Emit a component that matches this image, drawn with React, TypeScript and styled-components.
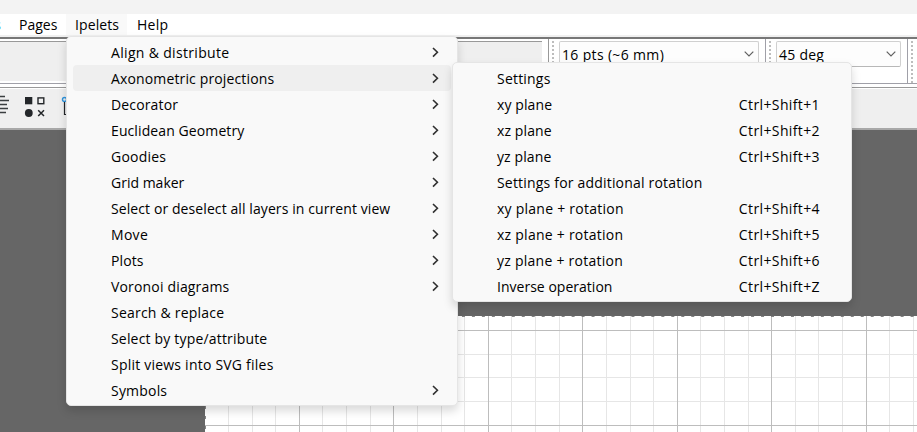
import React from "react";
import styled, { createGlobalStyle } from "styled-components";

const GlobalStyle = createGlobalStyle`
  * { box-sizing: border-box; }
  body {
    margin: 0;
    overflow: hidden;
    font-family: "Open Sans", "Noto Sans", sans-serif;
    font-size: 14px;
    color: #000;
  }
`;

const Window = styled.div`
  position: relative;
  width: 917px;
  height: 432px;
  display: flex;
  flex-direction: column;
  overflow: hidden;
  background: #666;
`;

const TitleStrip = styled.div`
  flex: none;
  height: 14px;
  background: #f3f3f3;
`;

const MenuBar = styled.nav`
  flex: none;
  height: 23px;
  display: flex;
  background: #fff;
  border-bottom: 2px solid #f0f0f0;
`;

const MenuBarItem = styled.div<{ $width: number; $pad: number; $active?: boolean }>`
  flex: none;
  width: ${(p) => p.$width}px;
  padding-left: ${(p) => p.$pad}px;
  line-height: 22px;
  white-space: nowrap;
  background: ${(p) => (p.$active ? "#f9f9f9" : "transparent")};
`;

const ClippedItem = styled.div`
  flex: none;
  width: 11px;
  display: flex;
  justify-content: flex-end;
  padding-right: 10px;
  line-height: 22px;
  color: #2a8ad8;
`;

const ToolBar = styled.div`
  flex: none;
  height: 51px;
  display: flex;
  background: #fff;
  border-top: 2px solid #777;
  border-bottom: 1px solid #999;
`;

const PanelArea = styled.div`
  flex: none;
  width: 549px;
  height: 45px;
  padding: 2px 6px 2px 0;
  border-right: 1px solid #999;
  border-bottom: 1px solid #a0a0a8;
`;

const Panel = styled.div`
  height: 40px;
  background: #efefef;
  border-top: 1px solid #999;
`;

const ComboSection = styled.div<{ $width: number }>`
  flex: none;
  width: ${(p) => p.$width}px;
  height: 45px;
  display: flex;
  align-items: flex-start;
  padding: 2px 6px 0 3px;
  border-right: 1px solid #a0a0a8;
  border-bottom: 1px solid #a0a0a8;
`;

const Grip = styled.div`
  flex: none;
  width: 2px;
  height: 42px;
  margin-right: 5px;
  background: repeating-linear-gradient(#bdbdbd 0 2px, transparent 2px 4px);
`;

const Combo = styled.div`
  flex: 1;
  height: 26px;
  display: flex;
  align-items: center;
  justify-content: space-between;
  padding: 0 4px 0 2px;
  background: #fdfdfd;
  border: 1px solid #d0d0d0;
  border-bottom-color: #b8b8b8;
  border-radius: 2px;
`;

const Label = styled.span<{ $tracking?: number }>`
  letter-spacing: ${(p) => p.$tracking ?? 0}px;
  white-space: nowrap;
`;

const IconBar = styled.div`
  flex: none;
  height: 42px;
  background: #efefef;
  border-top: 1px solid #fff;
  border-bottom: 2px solid #a8a8a8;
`;

const Workspace = styled.div`
  flex: 1;
  background: #666;
`;

const Drawing = styled.svg`
  display: block;
`;

const Popup = styled.div<{ $x: number; $y: number; $width: number }>`
  position: absolute;
  left: ${(p) => p.$x}px;
  top: ${(p) => p.$y}px;
  width: ${(p) => p.$width}px;
  padding: 2px 6px;
  background: #f9f9f9;
  border: 1px solid #e5e5e5;
  border-radius: 5px;
  box-shadow: 0 5px 10px rgba(0, 0, 0, 0.15);
`;

const MenuRow = styled.div<{ $active?: boolean; $end: number }>`
  height: 26px;
  display: flex;
  align-items: center;
  justify-content: space-between;
  padding: 0 ${(p) => p.$end}px 0 38px;
  border-radius: 4px;
  background: ${(p) => (p.$active ? "#efefef" : "transparent")};
`;

type Item = { label: string; tracking: number; sub?: boolean; active?: boolean };
type Action = { label: string; tracking: number; keys?: string };

const ipelets: Item[] = [
  { label: "Align & distribute", tracking: 0.33, sub: true },
  { label: "Axonometric projections", tracking: 0.14, sub: true, active: true },
  { label: "Decorator", tracking: 0.15, sub: true },
  { label: "Euclidean Geometry", tracking: 0.1, sub: true },
  { label: "Goodies", tracking: 0.22, sub: true },
  { label: "Grid maker", tracking: 0, sub: true },
  { label: "Select or deselect all layers in current view", tracking: 0.09, sub: true },
  { label: "Move", tracking: 0.3, sub: true },
  { label: "Plots", tracking: 0.1, sub: true },
  { label: "Voronoi diagrams", tracking: 0.17, sub: true },
  { label: "Search & replace", tracking: 0.22 },
  { label: "Select by type/attribute", tracking: 0.18 },
  { label: "Split views into SVG files", tracking: 0.22 },
  { label: "Symbols", tracking: 0.2, sub: true },
];

const projections: Action[] = [
  { label: "Settings", tracking: 0.2 },
  { label: "xy plane", tracking: 0.1, keys: "Ctrl+Shift+1" },
  { label: "xz plane", tracking: 0.1, keys: "Ctrl+Shift+2" },
  { label: "yz plane", tracking: 0.1, keys: "Ctrl+Shift+3" },
  { label: "Settings for additional rotation", tracking: 0.19 },
  { label: "xy plane + rotation", tracking: 0.25, keys: "Ctrl+Shift+4" },
  { label: "xz plane + rotation", tracking: 0.25, keys: "Ctrl+Shift+5" },
  { label: "yz plane + rotation", tracking: 0.25, keys: "Ctrl+Shift+6" },
  { label: "Inverse operation", tracking: 0.02, keys: "Ctrl+Shift+Z" },
];

const ChevronRight = () => (
  <Drawing width="7" height="11" viewBox="0 0 7 11" fill="none" stroke="#303030" strokeWidth="1.6">
    <path d="M1 1 L5.4 5.3 L1 9.6" />
  </Drawing>
);

const ChevronDown = () => (
  <Drawing width="10" height="6" viewBox="0 0 10 6" fill="none" stroke="#606060" strokeWidth="1.2">
    <path d="M.7 .7 L5 5 L9.3 .7" />
  </Drawing>
);

const ToolIcons = () => (
  <Drawing width="70" height="38" viewBox="0 89 70 38" fill="none">
    <path d="M0 96.5h5M0 100.5h9M0 104.5h7M0 108.5h8M0 112.5h6" stroke="#3a3e40" strokeWidth="1.4" />
    <rect x="25" y="97" width="7.3" height="7.3" fill="#232629" />
    <rect x="38" y="97.9" width="5.8" height="5.8" stroke="#232629" strokeWidth="1.4" />
    <circle cx="28.8" cy="113" r="3.9" fill="#232629" />
    <path d="M38.2 110.2l5.8 5.8M44 110.2l-5.8 5.8" stroke="#232629" strokeWidth="1.5" />
    <circle cx="64.5" cy="99.5" r="2" stroke="#2f94dd" strokeWidth="1.4" />
    <path d="M64.5 102v12.5h4" stroke="#232629" strokeWidth="1.2" />
  </Drawing>
);

const minorX = [228.5, 252.5, 275.5, 322.5, 346.5, 370.5, 417.5, 441.5, 464.5, 511.5, 535.5, 559.5, 606.5, 630.5, 653.5, 700.5, 724.5, 748.5, 795.5, 818.5, 842.5, 889.5, 913.5];
const majorX = [299.5, 393.5, 488.5, 582.5, 677.5, 771.5, 866.5];
const minorY = [354.5, 377.5, 401.5];
const majorY = [330.5, 425.5];
const vertical = (xs: number[]) => xs.map((x) => `M${x} 316V432`).join("");
const horizontal = (ys: number[]) => ys.map((y) => `M205 ${y}H917`).join("");

const PageGrid = () => (
  <Drawing width="917" height="302" viewBox="0 130 917 302" fill="none">
    <rect x="205" y="316" width="712" height="116" fill="#fff" />
    <path d={vertical(minorX) + horizontal(minorY)} stroke="#e6e6e6" />
    <path d={vertical(majorX) + horizontal(majorY)} stroke="#bdbdbd" />
    <path d="M212.7 316.4H917" stroke="#777" strokeWidth="1" strokeDasharray="3 6.97" />
    <path d="M205.4 316V432" stroke="#777" strokeWidth="1" strokeDasharray="3 7" />
  </Drawing>
);

export default function App() {
  return (
    <>
      <GlobalStyle />
      <Window>
        <TitleStrip />
        <MenuBar>
          <ClippedItem><Label>Views</Label></ClippedItem>
          <MenuBarItem $width={55} $pad={8}>Pages</MenuBarItem>
          <MenuBarItem $width={61} $pad={9} $active>
            <Label $tracking={0.1}>Ipelets</Label>
          </MenuBarItem>
          <MenuBarItem $width={60} $pad={10}>
            <Label $tracking={0.3}>Help</Label>
          </MenuBarItem>
        </MenuBar>
        <ToolBar>
          <PanelArea><Panel /></PanelArea>
          <ComboSection $width={217}>
            <Grip />
            <Combo><Label $tracking={0.34}>16 pts (~6 mm)</Label><ChevronDown /></Combo>
          </ComboSection>
          <ComboSection $width={142}>
            <Grip />
            <Combo><Label $tracking={0.25}>45 deg</Label><ChevronDown /></Combo>
          </ComboSection>
          <ComboSection $width={30}><Grip /></ComboSection>
        </ToolBar>
        <IconBar><ToolIcons /></IconBar>
        <Workspace><PageGrid /></Workspace>

        <Popup $x={66} $y={36} $width={392}>
          {ipelets.map((item) => (
            <MenuRow key={item.label} $active={item.active} $end={12}>
              <Label $tracking={item.tracking}>{item.label}</Label>
              {item.sub && <ChevronRight />}
            </MenuRow>
          ))}
        </Popup>
        <Popup $x={452} $y={62} $width={400}>
          {projections.map((action) => (
            <MenuRow key={action.label} $end={25}>
              <Label $tracking={action.tracking}>{action.label}</Label>
              {action.keys && <Label $tracking={0.38}>{action.keys}</Label>}
            </MenuRow>
          ))}
        </Popup>
      </Window>
    </>
  );
}
